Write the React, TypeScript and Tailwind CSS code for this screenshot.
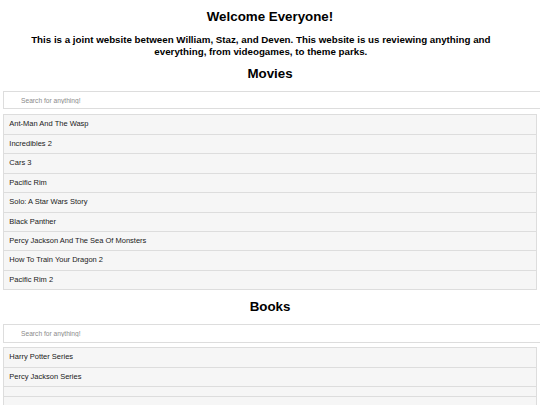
import React from "react";

const movies = [
  "Ant-Man And The Wasp",
  "Incredibles 2",
  "Cars 3",
  "Pacific Rim",
  "Solo: A Star Wars Story",
  "Black Panther",
  "Percy Jackson And The Sea Of Monsters",
  "How To Train Your Dragon 2",
  "Pacific Rim 2",
];

const books = ["Harry Potter Series", "Percy Jackson Series", "", ""];

function SearchBox({ className }: { className: string }) {
  return (
    <input
      type="text"
      placeholder="Search for anything!"
      className={`${className} box-border block h-[18.3px] w-[calc(100%+27px)] shrink-0 border border-[#dddddd] bg-white pl-[16.7px] pr-[8px] text-[6.67px] text-black outline-none placeholder:text-[#8a8a8a] font-['Liberation_Sans',Arial,sans-serif]`}
    />
  );
}

function List({ items, className }: { items: string[]; className: string }) {
  return (
    <ul className={`${className} m-0 list-none p-0`}>
      {items.map((t, i) => (
        <li key={i} className={i === 0 ? "" : "-mt-px"}>
          <a
            href="#"
            className={`block border border-[#dddddd] bg-[#f6f6f6] px-[5px] ${
              t ? "py-[5px]" : "py-[4.5px]"
            } text-[7.5px] leading-[8.45px] text-[#1a1a1a] no-underline`}
          >
            {t}
          </a>
        </li>
      ))}
    </ul>
  );
}

export default function App() {
  return (
    <div className="h-[405px] w-[540px] overflow-hidden bg-white font-['Liberation_Sans',Arial,sans-serif] text-black">
      <div className="flex flex-col px-[3.33px]">
        <h1 className="mt-[9px] text-center text-[13.33px] font-bold leading-[15.3px]">
          Welcome Everyone!
        </h1>
        <h2 className="ml-[5px] mt-[9.5px] w-[505px] text-center text-[9.75px] font-bold leading-[12.3px]">
          This is a joint website between William, Staz, and Deven. This website is us reviewing
          anything and everything, from videogames, to theme parks.
        </h2>
        <h1 className="mt-[8px] text-center text-[13.33px] font-bold leading-[15.3px]">Movies</h1>
        <SearchBox className="mt-[9.3px]" />
        <List items={movies} className="mt-[5px]" />
        <h1 className="mt-[8.7px] text-center text-[13.33px] font-bold leading-[15.3px]">Books</h1>
        <SearchBox className="mt-[10px]" />
        <List items={books} className="mt-[4.7px]" />
      </div>
    </div>
  );
}
